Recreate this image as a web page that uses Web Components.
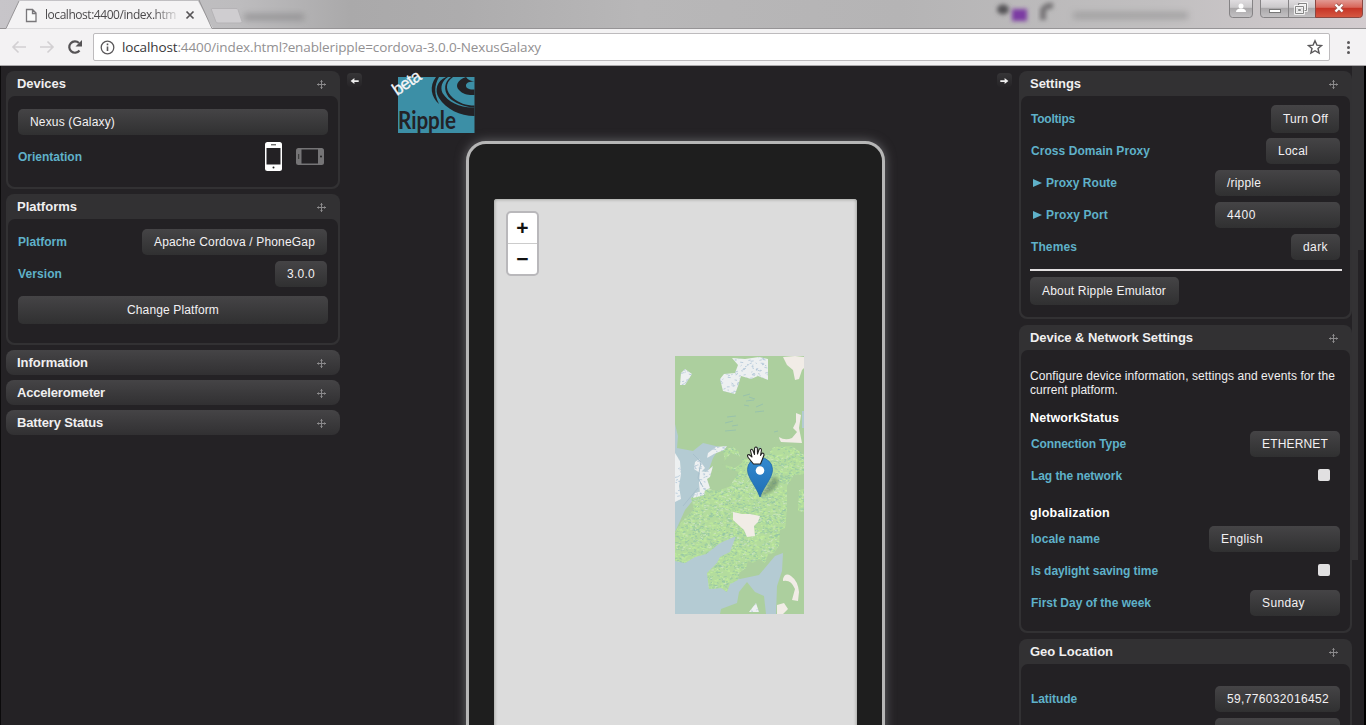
<!DOCTYPE html>
<html lang="en">
<head>
<meta charset="utf-8">
<title>Ripple Emulator</title>
<style>
html,body{margin:0;height:100%;overflow:hidden;background:#242225}
body{font:12px/14px "Liberation Sans",Arial,sans-serif;color:#f0eff0}
</style>
</head>
<body>
<ripple-app></ripple-app>
<script>
const define=(name,html,setup)=>customElements.define(name,class extends HTMLElement{
  connectedCallback(){
    if(this.shadowRoot)return;
    const t=document.createElement('template');
    t.innerHTML=html;
    this.attachShadow({mode:'open'}).append(t.content.cloneNode(true));
    if(setup)setup(this,this.shadowRoot);
  }
});

/* Panel with a title bar; "collapsed" shows the bar alone. */
define('ui-panel',`<style>
:host{display:block;box-sizing:border-box;background:#323133;border-radius:8px;padding:0 2px 2px;flex:none}
:host([collapsed]){background:linear-gradient(#454446,#313032);padding:0 2px;height:25px}
header{display:flex;align-items:center;justify-content:space-between;height:25px;padding:0 11px 0 9px;font-weight:bold;font-size:13px}
:host([collapsed]) section{display:none}
section{background:#232124;border-radius:7px;box-sizing:border-box;padding:0 10px;height:calc(100% - 25px);overflow:hidden}
svg{display:block;margin-top:2px}
</style><header><slot name="title"></slot><svg width="11" height="11" viewBox="0 0 11 11" stroke="#8b8a8c" fill="none"><path d="M5.5 1v9M1 5.5h9" stroke-width="1"/><path d="M4 2.500h3M4 8.500h3M2.500 4v3M8.500 4v3" stroke-width=".8" opacity=".75"/></svg></header><section><slot></slot></section>`);

/* Label on the left, control on the right. */
define('ui-row',`<style>
:host{display:flex;height:32px;align-items:center;justify-content:space-between;color:#5fb1c9;font-weight:bold}
</style><slot></slot>`);

define('ui-button',`<style>
:host{display:flex;box-sizing:border-box;width:var(--w);height:26px;align-items:center;padding-left:12px;border-radius:5px;background:linear-gradient(#454446,#303031);color:#f3f1f3;font-weight:normal}
:host([tall]){height:28px}
:host([center]){justify-content:center;padding-left:0}
</style><slot></slot>`);

define('ui-check',`<style>:host{display:block;width:12px;height:12px;border-radius:2px;background:#e1e0e1;margin:0 11px 2px 0}</style>`);

define('orientation-icons',`<style>:host{display:flex;align-items:center;gap:14px;margin:0 4px 2px 0}svg{display:block}</style>
<svg width="17" height="29" viewBox="0 0 17 29"><rect width="17" height="29" rx="2.5" fill="#fff"/><rect x="1.5" y="6" width="14" height="16.5" fill="#232124"/><path d="M6 2.8h5" stroke="#333"/><circle cx="8.5" cy="25.5" r="1" fill="#222"/></svg>
<svg width="28" height="17" viewBox="0 0 28 17"><rect width="28" height="17" rx="2.5" fill="#757476"/><rect x="5.5" y="1.5" width="16.5" height="14" fill="#232124"/><path d="M2.7 6v5" stroke="#333"/><circle cx="25" cy="8.5" r="1" fill="#222"/></svg>`);

define('arrow-button',`<style>:host{display:block;width:15px;height:14px;border-radius:4px;background:linear-gradient(#363537,#262427)}:host([right]) svg{transform:scaleX(-1)}svg{display:block}</style>
<svg width="15" height="15" viewBox="0 0 15 15"><path d="M3.600 8l3.800-3v2.200h4.300v1.700H7.400v2.100z" fill="#eee"/></svg>`);

define('ripple-logo',`<style>:host{display:block;width:85px;height:66px}svg{display:block;overflow:visible}</style>
<svg width="85" height="66" viewBox="0 0 85 66"><g transform="translate(8 9)">
<rect width="76.500" height="56" fill="#3c8fa6"/>
<g fill="#232226"><path d="M38 0C31 9 33 20 41 27C36 17 36 9 41 0Z"/>
<path d="M48 0C39 4 36 13 41 21C48 32 62 39 76.500 39V30.500C62 31 50 25 44.500 16C42 10 44 4 50 0Z"/>
<path d="M55 0C46 6 48 15 55 21C61 26 68 28.500 76.500 28.500V30.500C66 30 56 26 50.500 20C45.500 13 46 5 53 0Z"/>
<path d="M68 0C59 3 57 9 61 13C65 17.500 71 18.500 76.500 18V12.500C71 13 67.500 11 68 8C68.500 5.500 71.500 4.500 76.500 4.500C73 4 70 3 68 0Z"/></g>
<text x="0" y="51.500" textLength="58" lengthAdjust="spacingAndGlyphs" font-family="Lato,sans-serif" font-weight="700" font-size="24" fill="#232226">Ripple</text></g>
<text transform="translate(7 28) rotate(-34)" textLength="31" font-family="Liberation Sans,sans-serif" font-size="17" fill="#f6f6f8" stroke="#f6f6f8" stroke-width=".3">beta</text></svg>`);

define('map-tile',`<style>:host{display:block;width:129px;height:258px}svg{display:block}</style>
<svg width="129" height="258" viewBox="0 0 129 258"><defs><clipPath id="marsh"><path id="m"/></clipPath><clipPath id="snow"><path id="s"/></clipPath></defs>
<rect width="129" height="258" fill="#accf9e"/>
<path fill="#b4cbd3" d="M0 68L3 80L2 92L18 95L28 87L45 91L38 102L32 119L24 137L10 154L0 176Z M0 200L30 197L60 165L78 170L66 199L49 219L65 223L84 219L100 200L108 197L107 215L102 230L101 258H91L89 240L80 236L72 226L64 236L62 247L46 253L45 258H0Z"/>
<path id="green" fill="#b3dc9d"/>
<g id="dash" clip-path="url(#marsh)"></g>
<path fill="#accf9e" d="M36 118Q45 112 54 119Q56 130 45 134Q37 136 32 130Z M56 97L66 101L68 106L60 112L47 108Z"/>
<path id="white" fill="#edf0f1"/>
<g id="ice" clip-path="url(#snow)"></g>
<path fill="#f1ece6" d="M108 1L112 9L118 14L120 24L124 23L127 14L129 12V1L120 0Z M121 57L126 59L124 72L127 87L106 86Q104 83 104 81Q110 85 117 82L122 76L118 72L121 66Z M58 156L67 158L75 158L85 160L83 166L79 170L80 180L72 181L69 174L58 164Z M108 223Q110 216 116 220Q123 225 124 236L123 245L117 244L120 233Q116 223 108 225Z M102 249L109 247L113 253L108 258H102Z"/>
<path fill="#b4cbd3" d="M127 55H129V72H127Z"/>
<path fill="none" stroke="#8fbbb0" stroke-width=".7" d="M68 40l7-2M71 45l8-1M74 41l6 2M69 49l5 1M81 51l7-3M80 56l9-1M52 61l9-1M50 67l8-2M57 70l6-1M50 75l11-1M99 76l4-1M81 92l5-1"/>
<path fill="none" stroke="#a8c0cc" d="M18 98l8 8-3 16 5 9M8 150l15-18"/>
</svg>`,(host,root)=>{
  const marsh='M48 94L58 91L63 95L66 103L75 103L82 102L94 98L98 91L117 90L129 99V118L119 119L112 130L112 153L110 172L105 174L104 190L99 197L93 198L90 207L84 203L78 207L73 205L71 212L65 216L63 224L55 228L52 236L46 232L34 233L32 217L42 207L45 201L55 196L61 180L45 187L31 198L20 201L10 207L0 205V176L7 165L19 153L16 142L28 137L35 128L43 134L54 131L64 116L51 112Z M124 134L129 133V156L123 155Z';
  const snow='M57 2L70 3L84 1L93 3V24L83 20L76 23L66 20L63 30L60 38L48 35L45 23L49 18L60 17L63 9Z M6 17L10 13L17 18L10 29L5 29Z M0 97L5 105L6 118L4 130L6 143L0 146Z M33 97L41 91L52 90L49 94L39 98L32 102Z M20 106L24 103L30 112L25 117L19 113Z M25 115L31 116L38 110L35 121L32 123L35 132L25 137L24 127Z M20 137L30 134L29 139L18 142Z M74 256L81 247L84 256Z';
  const q=s=>root.querySelector(s);
  q('#m').setAttribute('d',marsh);q('#green').setAttribute('d',marsh);
  q('#s').setAttribute('d',snow);q('#white').setAttribute('d',snow);
  let seed=7;const r=()=>(seed=(seed*16807)%2147483647)/2147483647;
  const dashes=(n,color,y0,y1,w)=>{
    let d='';
    for(let i=0;i<n;i++)d+=`M${(r()*129).toFixed(1)} ${(y0+r()*(y1-y0)).toFixed(1)}l${(1+r()*2).toFixed(1)} ${(r()*2-1).toFixed(1)}`;
    return `<path d="${d}" stroke="${color}" stroke-width="${w}" fill="none"/>`;
  };
  q('#dash').innerHTML=dashes(1800,'#bfea9c',88,240,1.1)+dashes(2000,'#8fc2a8',88,240,.7)+dashes(700,'#cbe4c0',88,240,.9);
  q('#ice').innerHTML=dashes(2600,'#a6bed4',0,258,.7);
});

define('map-pin',`<style>:host{display:block;width:46px;height:52px}svg{display:block}</style>
<svg width="46" height="52" viewBox="0 0 46 52"><defs><linearGradient id="g" x2="0" y2="1"><stop stop-color="#3389cf"/><stop offset="1" stop-color="#1f6fb5"/></linearGradient><filter id="b"><feGaussianBlur stdDeviation="1.500"/></filter></defs>
<path d="M12.500 51L26 31Q34 30 31 38Q28 46 12.500 51Z" fill="#3c5548" opacity=".4" filter="url(#b)"/>
<path d="M.500 23.500a12.500 12 0 0 1 25 0C25.500 32 17 40 13 51C9 40 .500 32 .500 23.500Z" fill="url(#g)" stroke="#246ca8" stroke-width=".8"/><circle cx="13" cy="24.500" r="4.300" fill="#fff"/>
<path d="M6.500 18L1.200 11.500Q-.500 8.500 2 8.500L5 11L3.500 4.500Q4 2 6 4.500L7.500 8.500L7.600 2Q9 0 10.300 2L10.500 8L12.200 3Q14 1.500 14.500 4L13.500 9.500L15 7.300Q17 6.500 17 9L15.500 13L13.500 18Z" fill="#fff" stroke="#222" stroke-width="1.100" stroke-linejoin="round"/></svg>`);

define('zoom-control',`<style>
:host{display:block;box-sizing:border-box;width:33px;height:65px;border:2px solid #b9b8bb;border-radius:5px;background:#fff}
div{height:30px;display:grid;place-items:center}div+div{border-top:1px solid #ccc}
span{font:bold 21px/22px "Liberation Sans",sans-serif;color:#111}
</style><div><span>+</span></div><div><span>−</span></div>`);

define('phone-frame',`<style>
:host{display:block;box-sizing:border-box;width:419px;height:640px;border:3px solid #b6b6b6;border-radius:20px;background:#1e1e1e;box-shadow:0 0 11px #67666a;padding:55px 25px 0}
main{position:relative;height:600px;background:#dcdcdc;border-radius:3px 3px 0 0;box-shadow:inset 0 0 3px 1px #a9aaa8}
zoom-control{position:absolute;left:12px;top:12px}
map-tile{position:absolute;left:181px;top:157px}
map-pin{position:absolute;left:253px;top:247px}
</style><main><zoom-control></zoom-control><map-tile></map-tile><map-pin></map-pin></main>`);

define('browser-chrome',`<style>
:host{display:block;width:1366px;height:66px;font-family:"Open Sans",sans-serif;color:#4c4a4c;background:#f3f2f3}
.strip{position:relative;height:29px;background:linear-gradient(90deg,#c7c5c9 0,#bdbcbe 240px,#aaa9aa 350px,#adacad 460px,#b8b7b8 640px,#b5b4b5 900px,#c1bfc0 1160px,#d3cccf 1366px);overflow:hidden}
.strip>svg{position:absolute;left:0;top:0}
.tab{display:flex;align-items:center;height:29px;padding-left:45px;position:relative;width:160px;font-size:12px}
.tab ui-text{-webkit-mask:linear-gradient(90deg,#000 108px,transparent 136px)}
.bar{display:flex;height:37px;box-sizing:border-box;padding:4px 0 0;border-bottom:1px solid #aaa8aa}
.nav{width:93px}.url{display:flex;align-items:center;box-sizing:border-box;width:1237px;height:28px;border:1px solid #bdbbbd;border-radius:2px;background:#fff;font-size:13.500px;color:#929092}
.url b{font-weight:normal;color:#39373a}.info{margin:0 7px 0 6px}.url .star{margin-left:auto;margin-right:6px}
svg{display:block;flex:none}
</style><div class="strip">
<svg width="1366" height="29" viewBox="0 0 1366 29"><defs><filter id="bl" x="-50%" y="-200%" width="200%" height="500%"><feGaussianBlur stdDeviation="3"/></filter><filter id="sm" x="-60%" y="-60%" width="220%" height="220%"><feGaussianBlur stdDeviation="2"/></filter><linearGradient id="red" x2="0" y2="1"><stop stop-color="#e3a09a"/><stop offset=".45" stop-color="#d8665a"/><stop offset=".5" stop-color="#c63426"/><stop offset="1" stop-color="#d65943"/></linearGradient><linearGradient id="gr" x2="0" y2="1"><stop stop-color="#e2dfe2"/><stop offset=".45" stop-color="#cbc9cb"/><stop offset=".5" stop-color="#aaa8aa"/><stop offset="1" stop-color="#c4c2c4"/></linearGradient></defs>
<rect x="244" y="14" width="60" height="6" fill="#858486" filter="url(#bl)" opacity=".7"/><rect x="1073" y="12" width="115" height="7" fill="#969596" filter="url(#bl)" opacity=".7"/>
<ellipse cx="1003" cy="9.500" rx="6" ry="5" fill="#555256" filter="url(#sm)"/><rect x="1012" y="9" width="15" height="12" fill="#7b3ba3" filter="url(#sm)"/><path d="M1043 20V10q3-5 10-4" stroke="#777577" stroke-width="6" fill="none" filter="url(#sm)"/>
<path d="M6 28.500L19 1h179L213 28.500Z" fill="#f4f3f4"/><path d="M0 28.500H6L19 1M199 0L212 28.500H1366" fill="none" stroke="#969496"/>
<path d="M212 8.500h24q1.500 0 2 1l4 12q0 1.500-2 1.500h-22q-1.500 0-2-1l-4.500-12q-.5-1.500.5-1.500Z" fill="#cfcdd0" stroke="#b5b3b6"/>
<path d="M1229.500-1V14q0 3.500 3 3.500h17q3 0 3-3.500V-1Z" fill="url(#gr)" stroke="#858385"/><circle cx="1241" cy="6" r="2.500" fill="#fff"/><path d="M1236 12q0-3.500 5-3.500t5 3.500Z" fill="#fff"/>
<path d="M1260.500-1V14q0 3.500 3 3.500h52V-1ZM1288.500 0V17" fill="url(#gr)" stroke="#858385"/><path d="M1315.500-1V17.500h44q3 0 3-3.500V-1Z" fill="url(#red)" stroke="#8b4842"/>
<rect x="1269.500" y="9.500" width="11" height="3" fill="#fff" stroke="#777"/><path d="M1299.500 3.500h7v7h-2M1295.500 6.500h8v7h-8ZM1298.500 9.500h2v1h-2Z" fill="none" stroke="#fff" stroke-width="2.500"/><path d="M1298.500 5V3.500h8v7h-2M1295.500 6.500h8v7h-8ZM1298.500 9.500h2v1h-2Z" fill="none" stroke="#666" stroke-width=".8"/>
<path d="M1335.500 4.500l7 7M1342.500 4.500l-7 7" stroke="#a45a52" stroke-width="4"/><path d="M1335.500 4.500l7 7M1342.500 4.500l-7 7" stroke="#fff" stroke-width="2.200"/>
<path d="M26.500 9.500h6l3.500 3.500v8.500h-9.500ZM32.500 9.500v4h3.500" fill="#fafafa" stroke="#79777a" stroke-width="1.300"/><path d="M186.500 11.500l7 7M193.500 11.500l-7 7" stroke="#565456" stroke-width="1.700"/></svg>
<div class="tab"><ui-text w="130">localhost:4400/index.htm</ui-text></div></div>
<div class="bar"><svg class="nav" width="93" height="28" viewBox="0 0 93 28" fill="none" stroke="#d2d0d2" stroke-width="1.600"><path d="M26 14H13M18.500 8.500L13 14l5.500 5.500M40 14h13M47.500 8.500L53 14l-5.500 5.500"/><path d="M79.500 17.500A5.700 5.700 0 1 1 79 10" stroke="#555355" stroke-width="2.200"/><path d="M82 7v6.500h-6.500Z" fill="#555355" stroke="none"/></svg>
<div class="url"><svg class="info" width="15" height="15" viewBox="0 0 15 15" fill="none" stroke="#5a585a" stroke-width="1.300"><circle cx="7.500" cy="7.500" r="6.300"/><path d="M7.500 6.500v4.500M7.500 3.500v1.700" stroke-width="1.600"/></svg><ui-text w="418"><b>localhost</b>:4400/index.html?enableripple=cordova-3.0.0-NexusGalaxy</ui-text><svg class="star" width="16" height="16" viewBox="0 0 16 16"><path d="M8 1.800l1.900 4.300 4.600.4-3.500 3 1.100 4.600L8 11.700l-4.100 2.400L5 9.500l-3.500-3 4.600-.4Z" fill="none" stroke="#5a585a" stroke-width="1.400"/></svg></div>
<svg width="36" height="28" viewBox="0 0 36 28" fill="#5a585a"><circle cx="18.500" cy="9.500" r="1.500"/><circle cx="18.500" cy="14.500" r="1.500"/><circle cx="18.500" cy="19.500" r="1.500"/></svg></div>`);

define('ripple-app',`<style>
:host{display:grid;width:1366px;height:725px;grid-template:66px 659px/341px 1fr 347px;overflow:hidden}
browser-chrome{grid-column:1/4}
aside{display:flex;flex-direction:column;gap:5px;padding:5px 1px 0 6px;overflow:hidden}
aside.r{display:grid;grid-template-columns:333px 12px 2px;padding:0;gap:0}
aside.l{border-left:1px solid #0b0a0b;padding-left:5px}
.col{display:flex;flex-direction:column;gap:6px;padding-top:5px}
.track{background:linear-gradient(#333234 184px,transparent 184px),linear-gradient(90deg,#333234 6px,transparent 6px) 0 184px/12px 310px no-repeat}
.edge{background:#000}
.center{overflow:hidden}
.top{display:flex;height:75px}.top arrow-button{margin:7px 0 0 6px}.top ripple-logo{margin:2px 0 0 28px}
.top arrow-button[right]{margin:7px 7px 0 auto}
phone-frame{margin-left:125px}
.f8{padding-top:13px}hr{border:0;height:2px;background:#e2dfe0;margin:6px -2px 6px -1px}
p{margin:19px -3px 12px -1px;line-height:14px}h4{margin:13px 0 2px -1px;font:bold 12.500px/16px "Liberation Sans",sans-serif;color:#fff}
.r ui-row{margin-right:-1px}.r ui-row ui-button{margin-right:1px}
.tri{display:inline-block;width:9px;height:8px;margin-left:2px;margin-right:4px;background:#5fb1c9;clip-path:polygon(0 0,100% 50%,0 100%)}
.lab{display:flex;align-items:center}
</style>
<browser-chrome></browser-chrome>
<aside class="l">
<ui-panel style="height:118px"><ui-text slot="title" w="48">Devices</ui-text><div class="f8"><ui-button style="--w:310px"><ui-text w="84">Nexus (Galaxy)</ui-text></ui-button></div><ui-row style="margin-top:6px"><ui-text w="63">Orientation</ui-text><orientation-icons></orientation-icons></ui-row></ui-panel>
<ui-panel style="height:151px"><ui-text slot="title" w="59">Platforms</ui-text><ui-row style="margin-top:7px"><ui-text w="48">Platform</ui-text><ui-button style="--w:185px;margin-right:1px"><ui-text w="160">Apache Cordova / PhoneGap</ui-text></ui-button></ui-row><ui-row><ui-text w="43">Version</ui-text><ui-button style="--w:52px;margin-right:1px"><ui-text w="27">3.0.0</ui-text></ui-button></ui-row><ui-button tall center style="--w:310px;margin-top:6px"><ui-text w="91">Change Platform</ui-text></ui-button></ui-panel>
<ui-panel collapsed><ui-text slot="title" w="70">Information</ui-text></ui-panel>
<ui-panel collapsed><ui-text slot="title" w="87">Accelerometer</ui-text></ui-panel>
<ui-panel collapsed><ui-text slot="title" w="85">Battery Status</ui-text></ui-panel>
</aside>
<div class="center"><div class="top"><arrow-button></arrow-button><ripple-logo></ripple-logo><arrow-button right></arrow-button></div><phone-frame></phone-frame></div>
<aside class="r"><div class="col">
<ui-panel style="height:248px"><ui-text slot="title" w="50">Settings</ui-text>
<ui-row style="margin-top:7px"><ui-text w="43">Tooltips</ui-text><ui-button tall style="--w:68px;margin-right:2px"><ui-text w="44">Turn Off</ui-text></ui-button></ui-row>
<ui-row><ui-text w="118">Cross Domain Proxy</ui-text><ui-button style="--w:74px"><ui-text w="29">Local</ui-text></ui-button></ui-row>
<ui-row><div class="lab"><i class="tri"></i><ui-text w="70">Proxy Route</ui-text></div><ui-button style="--w:125px"><ui-text w="33">/ripple</ui-text></ui-button></ui-row>
<ui-row><div class="lab"><i class="tri"></i><ui-text w="61">Proxy Port</ui-text></div><ui-button style="--w:125px"><ui-text w="28">4400</ui-text></ui-button></ui-row>
<ui-row><ui-text w="45">Themes</ui-text><ui-button style="--w:49px"><ui-text w="24">dark</ui-text></ui-button></ui-row>
<hr><ui-button tall style="--w:149px;margin-left:-1px"><ui-text w="123">About Ripple Emulator</ui-text></ui-button></ui-panel>
<ui-panel style="height:308px"><ui-text slot="title" w="162">Device &amp; Network Settings</ui-text>
<p><ui-text w="304">Configure device information, settings and events for the</ui-text><ui-text w="87">current platform.</ui-text></p>
<h4><ui-text w="88">NetworkStatus</ui-text></h4>
<ui-row><ui-text w="94">Connection Type</ui-text><ui-button style="--w:90px"><ui-text w="65">ETHERNET</ui-text></ui-button></ui-row>
<ui-row><ui-text w="90">Lag the network</ui-text><ui-check></ui-check></ui-row>
<h4><ui-text w="79">globalization</ui-text></h4>
<ui-row><ui-text w="68">locale name</ui-text><ui-button style="--w:131px"><ui-text w="41">English</ui-text></ui-button></ui-row>
<ui-row><ui-text w="126">Is daylight saving time</ui-text><ui-check></ui-check></ui-row>
<ui-row><ui-text w="119">First Day of the week</ui-text><ui-button style="--w:90px"><ui-text w="42">Sunday</ui-text></ui-button></ui-row></ui-panel>
<ui-panel style="height:130px"><ui-text slot="title" w="82">Geo Location</ui-text><ui-row style="margin-top:19px"><ui-text w="45">Latitude</ui-text><ui-button style="--w:125px"><ui-text w="101">59,776032016452</ui-text></ui-button></ui-row><ui-row><span></span><ui-button style="--w:125px"></ui-button></ui-row></ui-panel>
</div><div class="track"></div><div class="edge"></div></aside>`);

/* Single line of text, tracked so that it takes the width in "w". */
define('ui-text',`<style>:host{display:block;white-space:nowrap}span{display:inline-block}</style><span><slot></slot></span>`,(host,root)=>{
  const s=root.querySelector('span'),w=+host.getAttribute('w');
  if(w)s.style.letterSpacing=((w+1-s.getBoundingClientRect().width)/host.textContent.length).toFixed(3)+'px';
});
</script>
</body>
</html>
